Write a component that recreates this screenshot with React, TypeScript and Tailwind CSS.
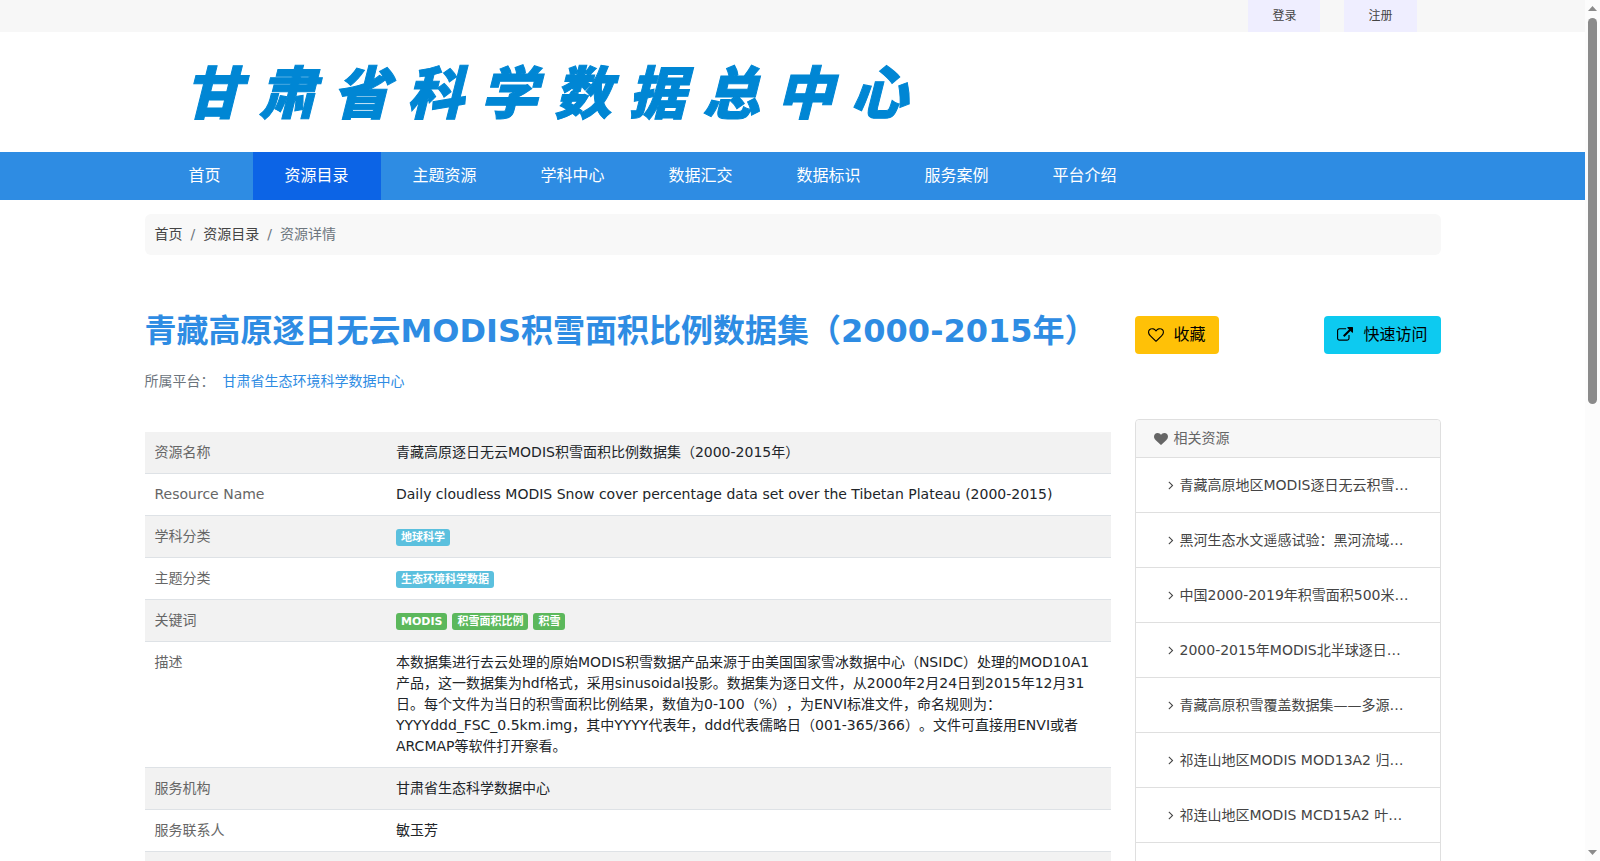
import type { ReactNode } from 'react';

const NAV = ['首页', '资源目录', '主题资源', '学科中心', '数据汇交', '数据标识', '服务案例', '平台介绍'];

const RELATED = [
  '青藏高原地区MODIS逐日无云积雪…',
  '黑河生态水文遥感试验：黑河流域…',
  '中国2000-2019年积雪面积500米…',
  '2000-2015年MODIS北半球逐日…',
  '青藏高原积雪覆盖数据集——多源…',
  '祁连山地区MODIS MOD13A2 归…',
  '祁连山地区MODIS MCD15A2 叶…',
];

const HEART =
  'M896 1664q-26 0-44-18l-624-602q-10-8-27.5-26t-55.5-65.5-68-97.5-53.5-121-23.5-138q0-220 127-344t351-124q62 0 126.5 21.5t120 58 95.5 68.5 76 68q36-36 76-68t95.5-68.5 120-58 126.5-21.5q224 0 351 124t127 344q0 221-229 450l-623 600q-18 18-44 18z';
const HEART_OUTLINE =
  'M1664 596q0-81-21.5-143t-55-98.5-81.5-59.5-94-31-98-8-112 25.5-110.5 64-86.5 72-60 61.5q-18 22-49 22t-49-22q-24-28-60-61.5t-86.5-72-110.5-64-112-25.5-98 8-94 31-81.5 59.5-55 98.5-21.5 143q0 168 187 355l581 560 580-559q188-188 188-356zm128 0q0 221-229 450l-623 600q-18 18-44 18t-44-18l-624-602q-10-8-27.5-26t-55.5-65.5-68-97.5-53.5-121-23.5-138q0-220 127-344t351-124q62 0 126.5 21.5t120 58 95.5 68.5 76 68q36-36 76-68t95.5-68.5 120-58 126.5-21.5q224 0 351 124t127 344z';
const EXTERNAL =
  'M1408 928v320q0 119-84.5 203.5t-203.5 84.5h-832q-119 0-203.5-84.5t-84.5-203.5v-832q0-119 84.5-203.5t203.5-84.5h704q14 0 23 9t9 23v64q0 14-9 23t-23 9h-704q-66 0-113 47t-47 113v832q0 66 47 113t113 47h832q66 0 113-47t47-113v-320q0-14 9-23t23-9h64q14 0 23 9t9 23zm384-864v512q0 26-19 45t-45 19-45-19l-176-176-652 652q-10 10-23 10t-23-10l-114-114q-10-10-10-23t10-23l652-652-176-176q-19-19-19-45t19-45 45-19h512q26 0 45 19t19 45z';
const ANGLE_RIGHT =
  'M1171 960q0 13-10 23l-466 466q-10 10-23 10t-23-10l-50-50q-10-10-10-23t10-23l393-393-393-393q-10-10-10-23t10-23l50-50q10-10 23-10t23 10l466 466q10 10 10 23z';

function Icon({ path, className }: { path: string; className: string }) {
  return (
    <svg viewBox="0 0 1792 1792" fill="currentColor" className={className} aria-hidden="true">
      <path d={path} />
    </svg>
  );
}

function Container({ children, className = '' }: { children: ReactNode; className?: string }) {
  return <div className={`mx-auto w-full max-w-[1320px] px-3 ${className}`}>{children}</div>;
}

function Badge({ children, green = false }: { children: ReactNode; green?: boolean }) {
  return (
    <span
      className={`rounded-[3px] px-[5px] text-[11px] leading-[17px] font-bold text-white ${
        green ? 'bg-[#5cb85c]' : 'bg-[#5bc0de]'
      }`}
    >
      {children}
    </span>
  );
}

function Row({ label, children }: { label?: string; children?: ReactNode }) {
  return (
    <tr className="border-b border-[#dee2e6] odd:bg-[#f2f2f2]">
      <th scope="row" className="w-1/4 p-[10px] text-left align-top font-normal text-[#666]">
        {label}
      </th>
      <td className="p-[10px] align-top">{children}</td>
    </tr>
  );
}

function ScrollBar() {
  return (
    <div className="flex w-[15px] shrink-0 flex-col items-center bg-[#fcfcfc] py-[6px]" aria-hidden="true">
      <svg viewBox="0 0 9 5" className="h-[5px] w-[9px] fill-[#8b8b8b]">
        <path d="M0 5 4.500 0 9 5z" />
      </svg>
      <div className="flex w-[9px] flex-1 flex-col py-[7px]">
        <div className="h-[386px] rounded-full bg-[#8b8b8b]" />
      </div>
      <svg viewBox="0 0 9 5" className="h-[5px] w-[9px] fill-[#8b8b8b]">
        <path d="M0 0h9L4.500 5z" />
      </svg>
    </div>
  );
}

export default function App() {
  return (
    <div
      lang="zh-CN"
      className="flex h-screen overflow-hidden bg-white font-['DejaVu_Sans','Noto_Sans_CJK_SC',sans-serif] text-sm leading-[21px] text-[#212529] [text-spacing-trim:space-all]"
    >
      <div className="min-w-0 flex-1 overflow-hidden">
        <div className="bg-[#f7f7f7]">
          <Container className="flex justify-end gap-6">
            <a href="#login" className="bg-[#efeeff] px-6 text-xs leading-8 text-[#444]">
              登录
            </a>
            <a href="#register" className="mr-6 bg-[#efeeff] px-6 text-xs leading-8 text-[#444]">
              注册
            </a>
          </Container>
        </div>

        <header>
          <Container className="flex h-[120px] items-center">
            <a
              href="#home"
              aria-label="甘肃省科学数据总中心"
              className="flex gap-[17px] pb-[6px] pl-10 font-['Noto_Sans_CJK_SC',sans-serif] text-[57px] leading-[60px] font-black text-[#0086d4] italic [-webkit-text-stroke:1px_#0086d4]"
            >
              {[...'甘肃省科学数据总中心'].map((char) => (
                <span key={char}>{char}</span>
              ))}
            </a>
          </Container>
        </header>

        <nav className="bg-[#2e8ce3]">
          <Container className="flex">
            <div className="flex pl-3">
              {NAV.map((item) => (
                <a
                  key={item}
                  href="#nav"
                  className={`px-8 text-base leading-[48px] text-white ${item === '资源目录' ? 'bg-[#0c64e6]' : ''}`}
                >
                  {item}
                </a>
              ))}
            </div>
          </Container>
        </nav>

        <Container className="pt-[14px]">
          <ol className="flex rounded-md bg-[#f8f8f8] p-[10px] text-[#6c757d]">
            <li>
              <a href="#home" className="text-[#444]">首页</a>
            </li>
            <li className="px-2">/</li>
            <li>
              <a href="#catalog" className="text-[#444]">资源目录</a>
            </li>
            <li className="px-2">/</li>
            <li>资源详情</li>
          </ol>
        </Container>

        <Container className="flex gap-6 pt-[57px]">
          <main className="min-w-0 flex-1">
            <h1 className="text-[32px] leading-[38px] font-bold whitespace-nowrap text-[#2e8ce3]">
              青藏高原逐日无云MODIS积雪面积比例数据集（2000-2015年）
            </h1>
            <p className="pt-[21px] text-[#6c757d]">
              所属平台：
              <a href="#platform" className="ml-2 text-[#2e8ce3]">
                甘肃省生态环境科学数据中心
              </a>
            </p>

            <table className="mt-10 w-full table-fixed border-collapse">
              <tbody>
                <Row label="资源名称">青藏高原逐日无云MODIS积雪面积比例数据集（2000-2015年）</Row>
                <Row label="Resource Name">
                  Daily cloudless MODIS Snow cover percentage data set over the Tibetan Plateau (2000-2015)
                </Row>
                <Row label="学科分类">
                  <div className="flex pt-[3px]">
                    <Badge>地球科学</Badge>
                  </div>
                </Row>
                <Row label="主题分类">
                  <div className="flex pt-[3px]">
                    <Badge>生态环境科学数据</Badge>
                  </div>
                </Row>
                <Row label="关键词">
                  <div className="flex gap-[5px] pt-[3px]">
                    <Badge green>MODIS</Badge>
                    <Badge green>积雪面积比例</Badge>
                    <Badge green>积雪</Badge>
                  </div>
                </Row>
                <Row label="描述">
                  本数据集进行去云处理的原始MODIS积雪数据产品来源于由美国国家雪冰数据中心（NSIDC）处理的MOD10A1产品，这一数据集为hdf格式，采用sinusoidal投影。数据集为逐日文件，从2000年2月24日到2015年12月31日。每个文件为当日的积雪面积比例结果，数值为0-100（%），为ENVI标准文件，命名规则为：YYYYddd_FSC_0.5km.img，其中YYYY代表年，ddd代表儒略日（001-365/366）。文件可直接用ENVI或者ARCMAP等软件打开察看。
                </Row>
                <Row label="服务机构">甘肃省生态科学数据中心</Row>
                <Row label="服务联系人">敏玉芳</Row>
                <Row />
              </tbody>
            </table>
          </main>

          <aside className="w-[306px] shrink-0 pt-1">
            <div className="flex justify-between text-base leading-6 text-black">
              <button type="button" className="flex items-center gap-[10px] rounded bg-[#ffc107] px-[13px] py-[7px]">
                <Icon path={HEART_OUTLINE} className="size-4" />
                收藏
              </button>
              <button type="button" className="flex items-center gap-[10px] rounded bg-[#0dcaf0] px-[13px] py-[7px]">
                <Icon path={EXTERNAL} className="size-4" />
                快速访问
              </button>
            </div>

            <section className="mt-[65px] min-h-screen rounded border border-[#dfdfdf]">
              <h2 className="flex items-center gap-[6px] rounded-t border-b border-[#dfdfdf] bg-[#f7f7f7] px-[18px] py-2 text-[#666]">
                <Icon path={HEART} className="size-[14px]" />
                相关资源
              </h2>
              <ul>
                {RELATED.map((title) => (
                  <li key={title} className="border-b border-[#dfdfdf] px-7 py-[17px] leading-5">
                    <a href="#related" className="flex items-center gap-[2px] text-[#444]">
                      <Icon path={ANGLE_RIGHT} className="size-[14px] shrink-0" />
                      {title}
                    </a>
                  </li>
                ))}
              </ul>
            </section>
          </aside>
        </Container>
      </div>
      <ScrollBar />
    </div>
  );
}
